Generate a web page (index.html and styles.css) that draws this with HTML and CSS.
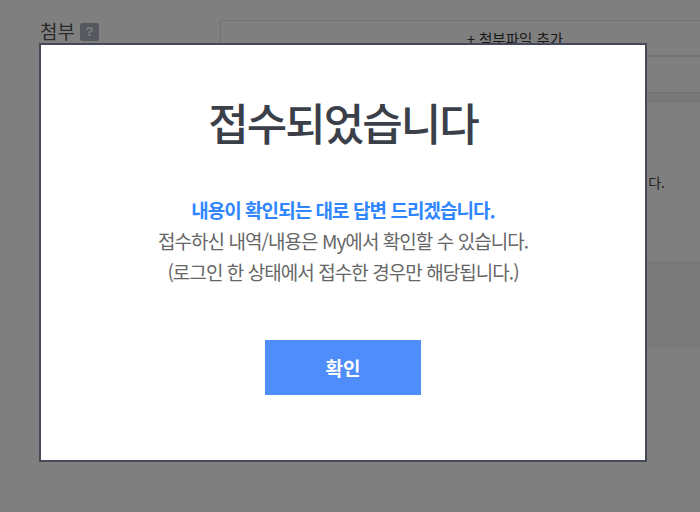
FILE: index.html
```html
<!DOCTYPE html>
<html lang="ko">
<head>
<meta charset="utf-8">
<title>접수되었습니다</title>
<link rel="stylesheet" href="styles.css">
</head>
<body>
<main class="page">
  <div class="attach-label">첨부 <span class="help">?</span></div>
  <div class="column">
    <div class="attach-box">
      <div class="attach-add">+ 첨부파일 추가</div>
      <div class="attach-list"></div>
    </div>
    <div class="band"></div>
    <p class="notice">개인정보 수집 및 이용에 동의하셔야 문의를 접수하실 수 있습니다.</p>
    <div class="panel"></div>
  </div>
</main>
<div class="overlay">
  <div class="modal">
    <h1 class="modal-title">접수되었습니다</h1>
    <div class="modal-body">
      <p class="modal-lead">내용이 확인되는 대로 답변 드리겠습니다.</p>
      <p class="modal-line">접수하신 내역/내용은 My에서 확인할 수 있습니다.</p>
      <p class="modal-line">(로그인 한 상태에서 접수한 경우만 해당됩니다.)</p>
    </div>
    <button class="modal-ok" type="button">확인</button>
  </div>
</div>
</body>
</html>
```
FILE: styles.css
```css
* { box-sizing: border-box; }
html, body { margin: 0; height: 512px; overflow: hidden; background: #fff; }
body { font-family: "Noto Sans CJK KR", "Noto Sans", sans-serif; color: #333; }
.page { display: flex; align-items: flex-start; height: 512px; padding: 20px 0 0 40px; overflow: hidden; }
.attach-label { flex: 0 0 180px; display: flex; align-items: center; gap: 5px; font-size: 19px; line-height: 22px; color: #555; }
.help { width: 19px; height: 18px; margin-top: 1px; background: #aab2be; border-radius: 2px; color: #fff; font: 700 13px/18px "Liberation Sans", sans-serif; text-align: center; }
.column { flex: 0 0 590px; }
.attach-box { border: 1px solid #e4e4e4; }
.attach-add { height: 36px; padding-top: 6px; border-bottom: 2px solid #e4e4e4; text-align: center; font-size: 14.5px; line-height: 24px; color: #333; }
.attach-list { height: 35px; }
.band { height: 10px; background: #f1f1f1; }
.notice { margin: 68px 145px 0 0; text-align: right; font-size: 14px; line-height: 22px; color: #444; white-space: nowrap; }
.panel { height: 87px; margin-top: 68px; background: #f4f4f5; }
.overlay { position: fixed; inset: 0; background: rgba(0, 0, 0, .5); }
.modal { position: absolute; left: 39px; top: 43px; width: 608px; height: 419px; background: #fff; border: 2px solid #464a58; display: flex; flex-direction: column; align-items: center; }
.modal-title { margin: 45px 0 0; font-size: 44px; line-height: 64px; font-weight: 500; letter-spacing: -2px; color: #3b3f4a; }
.modal-body { margin-top: 40px; text-align: center; font-size: 19px; line-height: 31px; letter-spacing: -.95px; color: #666; }
.modal-body p { margin: 0; }
.modal-lead { color: #2f86ff; font-weight: 700; }
.modal-ok { margin-top: 53px; width: 156px; height: 55px; border: 0; padding: 0; background: #4f8dfb; color: #fff; font: 700 19px/55px "Noto Sans CJK KR", sans-serif; }
```
